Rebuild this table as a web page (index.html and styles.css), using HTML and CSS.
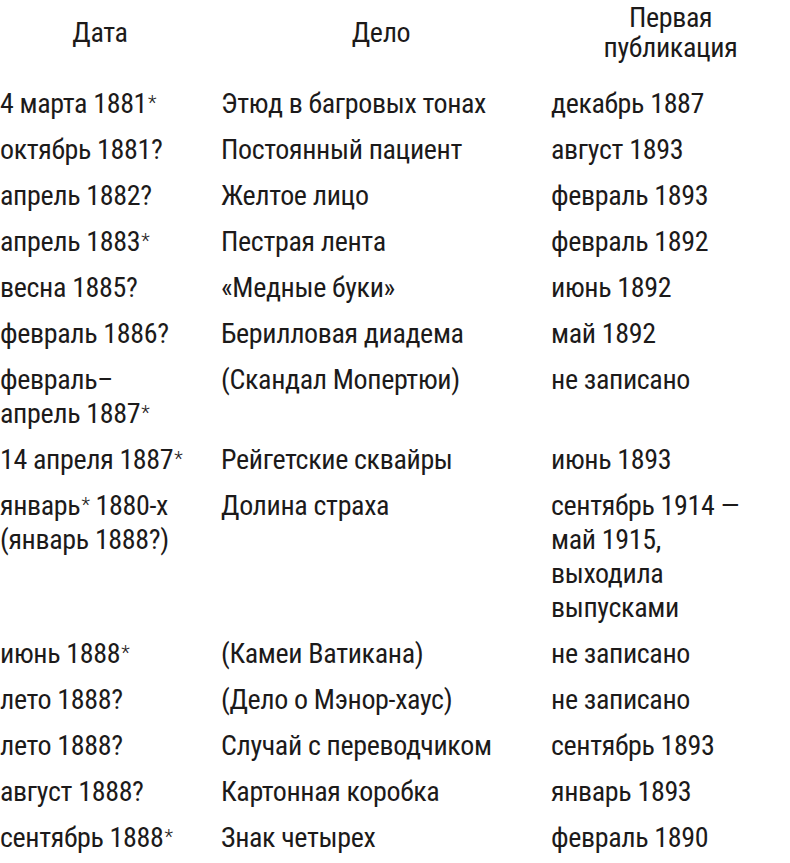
FILE: index.html
```html
<!DOCTYPE html>
<html lang="ru">
<head>
<meta charset="utf-8">
<link rel="stylesheet" href="styles.css">
</head>
<body>
<div class="table">
  <div class="head">
    <div class="c1">Дата</div>
    <div class="c2">Дело</div>
    <div class="c3">Первая<br>публикация</div>
  </div>
  <div class="row"><div class="c1">4 марта 1881<span class="ast">*</span></div><div class="c2">Этюд в багровых тонах</div><div class="c3">декабрь 1887</div></div>
  <div class="row"><div class="c1">октябрь 1881?</div><div class="c2">Постоянный пациент</div><div class="c3">август 1893</div></div>
  <div class="row"><div class="c1">апрель 1882?</div><div class="c2">Желтое лицо</div><div class="c3">февраль 1893</div></div>
  <div class="row"><div class="c1">апрель 1883<span class="ast">*</span></div><div class="c2">Пестрая лента</div><div class="c3">февраль 1892</div></div>
  <div class="row"><div class="c1">весна 1885?</div><div class="c2">«Медные буки»</div><div class="c3">июнь 1892</div></div>
  <div class="row"><div class="c1">февраль 1886?</div><div class="c2">Берилловая диадема</div><div class="c3">май 1892</div></div>
  <div class="row"><div class="c1">февраль–<br>апрель 1887<span class="ast">*</span></div><div class="c2">(Скандал Мопертюи)</div><div class="c3">не записано</div></div>
  <div class="row"><div class="c1">14 апреля 1887<span class="ast">*</span></div><div class="c2">Рейгетские сквайры</div><div class="c3">июнь 1893</div></div>
  <div class="row"><div class="c1">январь<span class="ast">*</span> 1880-х<br>(январь 1888?)</div><div class="c2">Долина страха</div><div class="c3">сентябрь 1914 —<br>май 1915,<br>выходила<br>выпусками</div></div>
  <div class="row"><div class="c1">июнь 1888<span class="ast">*</span></div><div class="c2">(Камеи Ватикана)</div><div class="c3">не записано</div></div>
  <div class="row"><div class="c1">лето 1888?</div><div class="c2">(Дело о Мэнор-хаус)</div><div class="c3">не записано</div></div>
  <div class="row"><div class="c1">лето 1888?</div><div class="c2">Случай с переводчиком</div><div class="c3">сентябрь 1893</div></div>
  <div class="row"><div class="c1">август 1888?</div><div class="c2">Картонная коробка</div><div class="c3">январь 1893</div></div>
  <div class="row"><div class="c1">сентябрь 1888<span class="ast">*</span></div><div class="c2">Знак четырех</div><div class="c3">февраль 1890</div></div>
</div>
</body>
</html>
```
FILE: styles.css
```css
html, body {
  margin: 0;
  padding: 0;
  background: #ffffff;
}
body {
  font-family: "Roboto Condensed", "DejaVu Sans Condensed", sans-serif;
  font-size: 28px;
  letter-spacing: -0.35px;
  color: #1c1a1a;
}
.table {
  display: flex;
  flex-direction: column;
}
.head, .row {
  display: grid;
  grid-template-columns: 221px 330px 1fr;
}
.head {
  align-items: center;
  line-height: 30px;
  padding-top: 3px;
  margin-bottom: 18px;
  text-align: center;
}
.head .c1 { padding-right: 21px; }
.head .c2 { padding-right: 10px; }
.row {
  line-height: 34px;
  padding: 6px 0;
}
.ast {
  font-size: 20px;
  font-weight: 300;
  line-height: 0;
  vertical-align: 3px;
  margin-left: 1px;
}
```
